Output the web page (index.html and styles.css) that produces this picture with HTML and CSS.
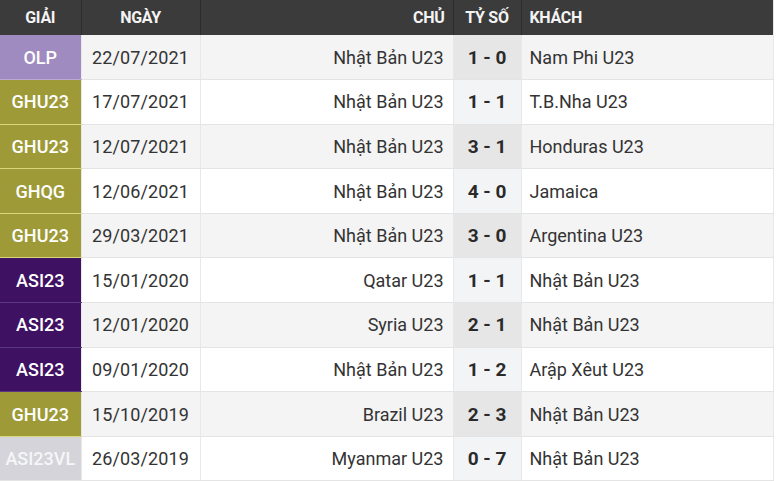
FILE: index.html
```html
<!DOCTYPE html>
<html lang="vi">
<head>
<meta charset="utf-8">
<link rel="stylesheet" href="styles.css">
</head>
<body>
<table class="results">
  <colgroup>
    <col class="c-league"><col class="c-date"><col class="c-home"><col class="c-score"><col class="c-away">
  </colgroup>
  <thead>
    <tr><th class="center">GIẢI</th><th class="center">NGÀY</th><th class="right">CHỦ</th><th class="center">TỶ SỐ</th><th class="left">KHÁCH</th></tr>
  </thead>
  <tbody>
    <tr><td class="league olp">OLP</td><td class="date">22/07/2021</td><td class="home">Nhật Bản U23</td><td class="score">1 - 0</td><td class="away">Nam Phi U23</td></tr>
    <tr><td class="league ghu">GHU23</td><td class="date">17/07/2021</td><td class="home">Nhật Bản U23</td><td class="score">1 - 1</td><td class="away">T.B.Nha U23</td></tr>
    <tr><td class="league ghu">GHU23</td><td class="date">12/07/2021</td><td class="home">Nhật Bản U23</td><td class="score">3 - 1</td><td class="away">Honduras U23</td></tr>
    <tr><td class="league ghu">GHQG</td><td class="date">12/06/2021</td><td class="home">Nhật Bản U23</td><td class="score">4 - 0</td><td class="away">Jamaica</td></tr>
    <tr><td class="league ghu">GHU23</td><td class="date">29/03/2021</td><td class="home">Nhật Bản U23</td><td class="score">3 - 0</td><td class="away">Argentina U23</td></tr>
    <tr><td class="league asi">ASI23</td><td class="date">15/01/2020</td><td class="home">Qatar U23</td><td class="score">1 - 1</td><td class="away">Nhật Bản U23</td></tr>
    <tr><td class="league asi">ASI23</td><td class="date">12/01/2020</td><td class="home">Syria U23</td><td class="score">2 - 1</td><td class="away">Nhật Bản U23</td></tr>
    <tr><td class="league asi">ASI23</td><td class="date">09/01/2020</td><td class="home">Nhật Bản U23</td><td class="score">1 - 2</td><td class="away">Arập Xêut U23</td></tr>
    <tr><td class="league ghu">GHU23</td><td class="date">15/10/2019</td><td class="home">Brazil U23</td><td class="score">2 - 3</td><td class="away">Nhật Bản U23</td></tr>
    <tr><td class="league asivl">ASI23VL</td><td class="date">26/03/2019</td><td class="home">Myanmar U23</td><td class="score">0 - 7</td><td class="away">Nhật Bản U23</td></tr>
  </tbody>
</table>
</body>
</html>
```
FILE: styles.css
```css
html, body {
  margin: 0;
  padding: 0;
  background: #ffffff;
}
body {
  width: 780px;
  height: 481px;
  overflow: hidden;
  font-family: Roboto, "Liberation Sans", sans-serif;
}
.results {
  width: 774px;
  border-collapse: collapse;
  table-layout: fixed;
  border-right: 1px solid #e6e6e6;
}
.c-league { width: 81px; }
.c-date { width: 119px; }
.c-home { width: 253px; }
.c-score { width: 68px; }
.c-away { width: auto; }

.results thead th {
  height: 35px;
  padding: 0 8px;
  background: #3b3b3b;
  color: #f4f4f4;
  font-size: 16px;
  font-weight: 700;
  border-right: 1px solid #2c2c2c;
  box-sizing: border-box;
  letter-spacing: -0.3px;
}
.results thead th:last-child { border-right: none; }
.center { text-align: center; }
.right { text-align: right; }
.left { text-align: left; }

.results tbody td {
  height: 44.6px;
  box-sizing: border-box;
  padding: 0 8px;
  font-size: 18px;
  color: #333333;
  border-bottom: 1px solid #e4e4e4;
  border-right: 1px solid #e8e8e8;
  white-space: nowrap;
}
.results tbody tr:nth-child(odd) td { background: #f4f4f4; }
.results tbody tr:nth-child(even) td { background: #ffffff; }
.results tbody tr:nth-child(odd) td.score { background: #e6e6e6; }
.results tbody tr:nth-child(even) td.score { background: #f3f4f6; }

.date { text-align: center; letter-spacing: 0.1px; }
.home { text-align: right; padding-right: 9px !important; }
.score { text-align: center; font-weight: 700; color: #2a2a2a !important; font-size: 19px !important; padding: 0 !important; }
.away { text-align: left; }

.results tbody td.league {
  text-align: center;
  color: #ffffff;
  font-size: 18px;
  font-weight: 500;
  padding: 0;
}
.results tbody tr td.olp { background: #9f8bc0; border-bottom-color: #b9aad3; }
.results tbody tr td.ghu { background: #9d9a37; border-bottom-color: #d9d77a; }
.results tbody tr td.asi { background: #3e1162; border-bottom-color: #5a3580; }
.results tbody tr td.asivl { background: #d4d4da; color: #f6f6f8; }
```
